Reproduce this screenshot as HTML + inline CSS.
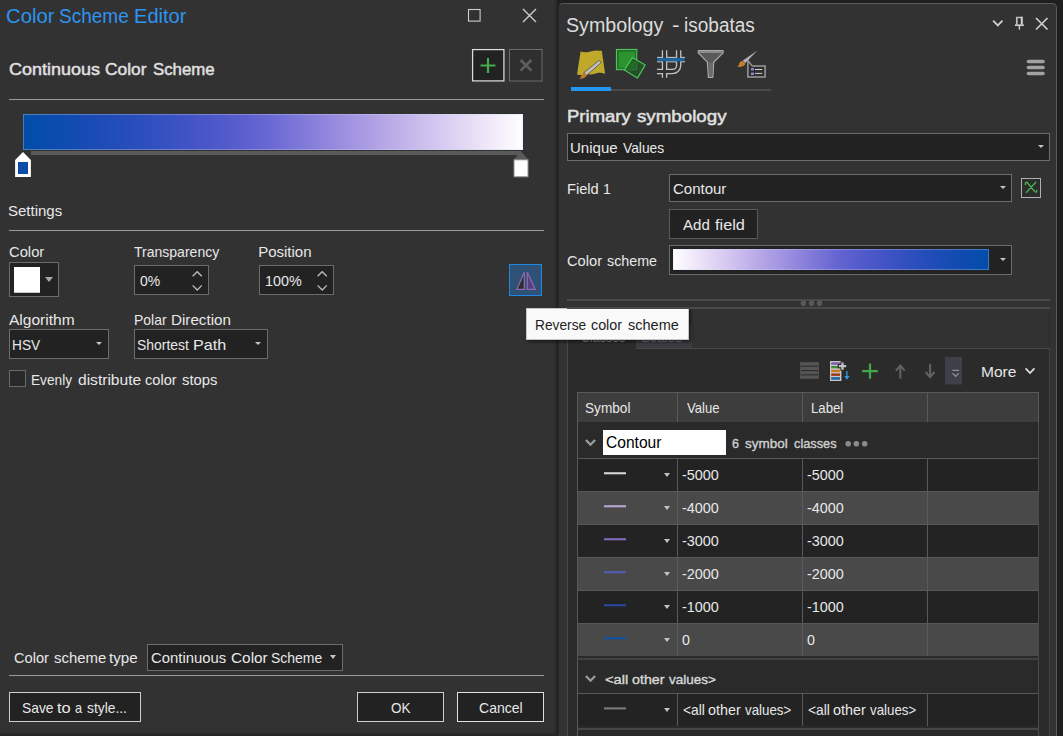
<!DOCTYPE html>
<html lang="en">
<head>
<meta charset="utf-8">
<title>Color Scheme Editor</title>
<style>
html,body{margin:0;padding:0;}
body{width:1063px;height:736px;overflow:hidden;background:#1f1f1f;position:relative;
 font-family:"Liberation Sans",sans-serif;font-size:15px;color:#e4e4e4;}
.abs,.t,.box,.ln{position:absolute;box-sizing:border-box;}
.t{white-space:nowrap;transform-origin:0 0;display:block;}
.box{background:#222223;border:1px solid #6c6c6c;}
.ln{background:#9a9a9a;height:1px;}
svg{position:absolute;overflow:visible;}
#left{position:absolute;left:0;top:0;width:557px;height:734px;background:#323232;
 box-shadow:inset -3px -2px 3px -2px rgba(0,0,0,.3);}
#right{position:absolute;left:558px;top:3px;width:499px;height:740px;background:#323232;box-sizing:border-box;
 border-top:1px solid #565b64;border-right:1px solid #565b64;border-left:1px solid #2a2a2a;border-radius:5px 5px 0 0;}
.row{position:absolute;left:578px;width:460px;height:32px;background:#232323;}
.row.alt{background:#494949;}
.row i{position:absolute;top:0;width:1px;height:32px;background:#5a5a5a;}
.hl{position:absolute;left:578px;width:460px;height:1px;background:#585858;}
.sym{position:absolute;left:604px;width:22px;height:2.4px;margin-top:.3px}
.dd{position:absolute;width:0;height:0;border-left:3.5px solid transparent;border-right:3.5px solid transparent;border-top:4.5px solid #c4c4c4;}
</style>
</head>
<body>

<!-- ================= LEFT: Color Scheme Editor ================= -->
<div id="left"></div>
<div class="abs" style="left:0;top:734px;width:558px;height:2px;background:#262626"></div>

<!-- window buttons -->
<svg style="left:0;top:0" width="557" height="100">
 <rect x="468.5" y="9.5" width="11.6" height="11.6" fill="none" stroke="#cdcdcd" stroke-width="1.1"/>
 <path d="M523 9 L536 22 M536 9 L523 22" stroke="#cdcdcd" stroke-width="1.4" fill="none"/>
 <!-- add / remove stop -->
 <rect x="472.6" y="49.6" width="31.3" height="31.3" fill="#222222" stroke="#dcdcdc" stroke-width="1.25"/>
 <path d="M488 58 V73 M480.5 65.5 H495.5" stroke="#43ad4b" stroke-width="2.2" fill="none"/>
 <rect x="509.5" y="49.5" width="32.5" height="31.5" fill="#2f2f2f" stroke="#6c6c6c" stroke-width="1"/>
 <path d="M520.6 60 L531.4 70.6 M531.4 60 L520.6 70.6" stroke="#5e5e5e" stroke-width="2.6" fill="none"/>
</svg>
<div class="ln" style="left:9px;top:99px;width:535px"></div>

<!-- gradient ramp -->
<div class="abs" style="left:23px;top:114px;width:500px;height:36px;background:linear-gradient(to right,rgb(0,77,168) 0.0%,rgb(9,76,173) 5.0%,rgb(18,75,177) 10.0%,rgb(27,76,181) 15.0%,rgb(37,77,186) 20.0%,rgb(47,79,190) 25.0%,rgb(58,82,194) 30.0%,rgb(70,85,199) 35.0%,rgb(81,90,203) 40.0%,rgb(93,96,207) 45.0%,rgb(108,106,212) 50.0%,rgb(125,119,216) 55.0%,rgb(142,132,220) 60.0%,rgb(159,146,225) 65.0%,rgb(175,160,229) 70.0%,rgb(190,175,233) 75.0%,rgb(205,190,238) 80.0%,rgb(219,206,242) 85.0%,rgb(232,222,246) 90.0%,rgb(244,238,251) 95.0%,rgb(255,255,255) 100.0%);box-shadow:inset 0 0 0 1px rgba(200,215,240,.35)"></div>
<div class="abs" style="left:31px;top:151px;width:490px;height:4px;background:#5a5a5a"></div>
<svg style="left:0;top:145px" width="557" height="40">
 <path d="M15.1 15 L23 7 L30.9 15 V32 H15.1 Z" fill="#ffffff"/>
 <rect x="18" y="17" width="10" height="12" fill="#0a4ba8"/>
 <path d="M513.5 14.8 L521 6.5 L528.5 14.8 Z" fill="#5a5a5a"/>
 <rect x="514" y="14.8" width="14" height="17" fill="#ffffff" stroke="#8e8e8e" stroke-width="1"/>
</svg>

<div class="ln" style="left:9px;top:230px;width:535px"></div>

<!-- color picker -->
<div class="box" style="left:9px;top:262px;width:50px;height:35px"></div>
<div class="abs" style="left:13.5px;top:266.5px;width:26.5px;height:26.5px;background:#fff;border-bottom:1px solid #c8c8c8"></div>
<div class="dd" style="left:45px;top:277px;border-left-width:4.5px;border-right-width:4.5px;border-top:5.5px solid #a8a8a8"></div>

<!-- spinners -->
<div class="box" style="left:134px;top:265px;width:75px;height:30px"></div>
<div class="box" style="left:259px;top:265px;width:75px;height:30px"></div>
<svg style="left:0;top:260px" width="557" height="40">
 <path d="M192.6 16.3 L197.2 11.7 L201.8 16.3 M192.6 25.4 L197.2 30 L201.8 25.4" fill="none" stroke="#bdbdbd" stroke-width="1.3"/>
 <path d="M317.6 16.3 L322.2 11.7 L326.8 16.3 M317.6 25.4 L322.2 30 L326.8 25.4" fill="none" stroke="#bdbdbd" stroke-width="1.3"/>
</svg>

<!-- reverse button -->
<div class="abs" style="left:509px;top:264px;width:33px;height:32px;background:#2f5175;border:1px solid #1e88e5"></div>
<svg style="left:500px;top:260px" width="50" height="40">
 <path d="M24.3 12.2 L16.9 29.3 H24.3 Z" fill="#2e2e31" stroke="#8e6bb0" stroke-width="1.2" stroke-linejoin="miter"/>
 <path d="M27.3 12.2 L35.2 29.3 H27.3 Z" fill="#563f80" stroke="#8e6bb0" stroke-width="1.2" stroke-linejoin="miter"/>
</svg>

<!-- combo boxes -->
<div class="box" style="left:9px;top:329px;width:100px;height:30px"></div>
<div class="dd" style="left:96px;top:341.5px;border-left-width:3.2px;border-right-width:3.2px;border-top-width:3.6px"></div>
<div class="box" style="left:134px;top:329px;width:134px;height:30px"></div>
<div class="dd" style="left:255px;top:341.5px;border-left-width:3.2px;border-right-width:3.2px;border-top-width:3.6px"></div>

<!-- checkbox -->
<div class="abs" style="left:9px;top:370px;width:17px;height:17px;background:#292929;border:1px solid #6a6a6a"></div>

<!-- bottom -->
<div class="box" style="left:147px;top:644px;width:196px;height:27px"></div>
<div class="dd" style="left:330px;top:654.5px;border-left-width:3.3px;border-right-width:3.3px;border-top-width:4px"></div>
<div class="ln" style="left:9px;top:675px;width:535px"></div>
<div class="box" style="left:9px;top:692px;width:132px;height:30px;border-color:#cfcfcf"></div>
<div class="box" style="left:357px;top:692px;width:87px;height:30px;border-color:#cfcfcf"></div>
<div class="box" style="left:457px;top:692px;width:87px;height:30px;border-color:#e0e0e0"></div>

<!-- ================= RIGHT: Symbology pane ================= -->
<div id="right"></div>

<!-- header icons -->
<svg style="left:558px;top:0" width="505" height="100" viewBox="558 0 505 100">
 <!-- pane buttons -->
 <path d="M993.1 20.7 L997.8 25.5 L1002.5 20.7" fill="none" stroke="#cfcfcf" stroke-width="1.8"/>
 <path d="M1016.8 24.6 V17.5 H1021.6" fill="none" stroke="#bdbdbd" stroke-width="1.7"/>
 <path d="M1021.8 16.7 V24.6" stroke="#d2d2d2" stroke-width="2"/>
 <path d="M1015 25.2 H1023.8" stroke="#d2d2d2" stroke-width="1.7"/>
 <path d="M1019.4 25.5 V29.7" stroke="#cfcfcf" stroke-width="1.4"/>
 <path d="M1036 18 L1047.5 29.5 M1047.5 18 L1036 29.5" stroke="#cfcfcf" stroke-width="1.7" fill="none"/>
 <!-- hamburger -->
 <g stroke="#a2a2a2" stroke-width="3.6" stroke-linecap="round">
  <path d="M1028.5 61.5 H1043"/><path d="M1028.5 67.5 H1043"/><path d="M1028.5 73.5 H1043"/>
 </g>
 <!-- 1: primary symbology (yellow sheet + brush) -->
 <path d="M580.6 51.6 C583.5 52.6 586 52.4 588.5 52 C591.5 51.4 593.5 50.4 596 50.4 C598 50.4 600 50.9 601.8 50.7 L605.1 73.9 C602.5 72.6 600 72.6 597.6 73.1 C594.5 73.8 592.5 74.6 590 74.4 C586 74.1 583.5 75.6 580 75.1 C579 74.9 578 74.6 577 74.4 Z" fill="#bfa82a"/>
 <path d="M598.9 60.5 C599.9 60.3 601.1 61.7 600.9 62.9 L586.4 75.6 L584.1 72.5 Z" fill="#bdbdbd" stroke="#4a4530" stroke-width=".7"/>
 <path d="M584.1 72.4 L586.5 75.6 C586 77.3 584.2 78.3 582.6 78.4 C581.4 78.9 580.2 78.9 579.3 78.8 C580.4 78 580.9 77.2 581.3 76 C581.6 74.4 582.6 73 584.1 72.4 Z" fill="#c07a2a"/>
 <!-- 2: vary by attribute (green squares) -->
 <rect x="616.45" y="49.45" width="20.3" height="20.2" fill="#226f2a" stroke="#50c55d" stroke-width="1.1"/>
 <rect x="618.7" y="51.6" width="16.3" height="16.3" fill="#2c932e"/>
 <path d="M632.6 57.7 L645.2 64.9 L637.4 78.1 L624.5 70.1 Z" fill="#1f5a24" fill-opacity=".7" stroke="#50c55d" stroke-width="1.2" stroke-linejoin="round"/>
 <path d="M632.9 59.6 L643.3 65.5 L636.9 76.2 L626.4 69.6 Z" fill="none" stroke="#1d5a23" stroke-opacity=".8" stroke-width="1.2"/>
 <!-- 3: scales (roads) -->
 <g fill="none" stroke="#c2c2c2" stroke-width="5.5">
  <path d="M664.55 50.2 V77.8"/><path d="M678.65 50.2 V65.2 C678.65 68.9 676 71.45 672.4 71.45 H657"/><path d="M657 59.6 H684.9"/>
 </g>
 <g fill="none" stroke="#323232" stroke-width="2.9">
  <path d="M664.55 49.6 V78.4"/><path d="M678.65 49.6 V65.2 C678.65 68.9 676 71.45 672.4 71.45 H656.4"/><path d="M656.4 59.6 H685.5"/>
 </g>
 <rect x="657.3" y="57.9" width="27.1" height="3.5" fill="#1f6299"/>
 <!-- 4: filter -->
 <path d="M698.3 50.5 H723.1 V52.9 L713.7 62.2 L712.8 77.4 H708.4 L707.4 62.2 L698.3 52.9 Z" fill="#595959" stroke="#ababab" stroke-width="1.2" stroke-linejoin="round"/>
 <rect x="698.9" y="51.1" width="23.6" height="1.9" fill="#8c8c8c"/>
 <path d="M708.3 62.6 H712.9 L712.2 76.8 H709 Z" fill="#6b6b6b"/>
 <!-- 5: advanced (brush + list) -->
 <path d="M747.9 60.6 V76.9 H765.1 V66.1 H752.4 Z" fill="#2f2f2f" stroke="#9a9a9a" stroke-width="1.5"/>
 <path d="M757.4 50.4 L745.3 63 L742.6 60.8 Z" fill="#b4b4b4"/>
 <path d="M742 60.9 L745.3 63.3 C745.2 65 743.6 66.3 741.8 66.6 C740.2 67.2 738.4 67 737 66.6 C738.4 65.8 739 64.9 739.3 63.6 C739.6 62.2 740.6 61.2 742 60.9 Z" fill="#c4802c"/>
 <rect x="751" y="68" width="3" height="2.4" fill="#9a7fd4"/><rect x="751" y="72.6" width="3" height="2.4" fill="#9a7fd4"/>
 <path d="M755 69.5 H762.2 M755 73.4 H762.2" stroke="#d0d0d0" stroke-width="1"/>
</svg>
<div class="abs" style="left:611px;top:89px;width:160px;height:2px;background:#4b4b4b"></div>
<div class="abs" style="left:571px;top:87px;width:40px;height:4px;background:#2196f3"></div>

<!-- primary symbology controls -->
<div class="box" style="left:567px;top:133px;width:483px;height:28px"></div>
<div class="dd" style="left:1038px;top:145px;border-left-width:3.2px;border-right-width:3.2px;border-top-width:3.8px"></div>
<div class="box" style="left:669px;top:174px;width:343px;height:28px"></div>
<div class="dd" style="left:1000px;top:186px;border-left-width:3.2px;border-right-width:3.2px;border-top-width:3.8px"></div>
<div class="box" style="left:1021px;top:178px;width:20px;height:20px;border-color:#b0b0b0;background:#2d2d2d"></div>
<svg style="left:1021px;top:178px" width="20" height="20">
 <path d="M4.3 6.5 C4.1 4.6 5.4 3.6 6.6 5 L13.6 13.4 C14.8 14.9 15.9 14 15.7 12.3 M14.8 4.2 L5.4 14.4" fill="none" stroke="#4ab457" stroke-width="1.35" stroke-linecap="round"/>
</svg>
<div class="box" style="left:669px;top:209px;width:89px;height:30px;border-color:#5a5a5a"></div>
<div class="box" style="left:669px;top:245px;width:343px;height:30px"></div>
<div class="abs" style="left:673px;top:249px;width:316px;height:21px;background:linear-gradient(to right,rgb(255,255,255) 0.0%,rgb(244,238,251) 5.0%,rgb(232,222,246) 10.0%,rgb(219,206,242) 15.0%,rgb(205,190,238) 20.0%,rgb(190,175,233) 25.0%,rgb(175,160,229) 30.0%,rgb(159,146,225) 35.0%,rgb(142,132,220) 40.0%,rgb(125,119,216) 45.0%,rgb(108,106,212) 50.0%,rgb(93,96,207) 55.0%,rgb(81,90,203) 60.0%,rgb(70,85,199) 65.0%,rgb(58,82,194) 70.0%,rgb(47,79,190) 75.0%,rgb(37,77,186) 80.0%,rgb(27,76,181) 85.0%,rgb(18,75,177) 90.0%,rgb(9,76,173) 95.0%,rgb(0,77,168) 100.0%);box-shadow:inset 0 0 0 1px rgba(210,220,245,.3)"></div>
<div class="dd" style="left:1000px;top:258px;border-left-width:3.2px;border-right-width:3.2px;border-top-width:3.8px"></div>

<!-- splitter -->
<div class="abs" style="left:567px;top:299px;width:483px;height:2px;background:#4a4a4a"></div>
<div class="abs" style="left:567px;top:307px;width:483px;height:2px;background:#4a4a4a;z-index:1"></div>
<svg style="left:795px;top:298px;z-index:2" width="30" height="10"><g fill="#5a5a5a"><circle cx="8.4" cy="5.2" r="2.7"/><circle cx="16.5" cy="5.2" r="2.7"/><circle cx="24.5" cy="5.2" r="2.7"/></g></svg>

<!-- tab control -->
<div class="abs" style="left:567px;top:307px;width:483px;height:440px;background:#2b2b2b;border-left:1px solid #484848"></div>
<div class="abs" style="left:1049px;top:348px;width:1px;height:400px;background:#444444"></div>
<div class="abs" style="left:568px;top:308px;width:481px;height:40px;background:#323232"></div>
<div class="abs" style="left:568px;top:325px;width:68px;height:24px;background:#2b2b2b"></div>
<div class="abs" style="left:636px;top:325px;width:56px;height:23px;background:#3b3c41"></div>
<div class="abs" style="left:636px;top:348px;width:414px;height:1px;background:#484848"></div>

<!-- class toolbar -->
<svg style="left:790px;top:350px" width="273" height="42" viewBox="790 350 273 42">
 <g fill="#555555"><rect x="800.5" y="362.5" width="18" height="3.2"/><rect x="800.5" y="366.8" width="18" height="3.2"/><rect x="800.5" y="371.1" width="18" height="3.2"/><rect x="800.5" y="375.4" width="18" height="3.2"/></g>
 <rect x="800.5" y="362.5" width="18" height="16.1" fill="none" stroke="#4d4d4d" stroke-width="1"/>
 <!-- list + add values -->
 <rect x="830" y="361" width="11.4" height="20" fill="#c9c9c9"/>
 <rect x="831.2" y="362.2" width="8.8" height="2.6" fill="#7e5fb0"/>
 <rect x="831.2" y="366" width="8.8" height="2.3" fill="#3d8a3d"/>
 <rect x="831.2" y="369.8" width="8.8" height="2.3" fill="#c87a1e"/>
 <rect x="831.2" y="373.4" width="8.8" height="2.5" fill="#a03a1a"/>
 <rect x="831.2" y="377.1" width="8.8" height="2.7" fill="#1f6aa5"/>
 <path d="M842.5 361.4 V370.8 M837.8 366.1 H847.2" stroke="#2b2b2b" stroke-width="4.4"/>
 <path d="M842.5 362.5 V369.8 M838.9 366.1 H846.2" stroke="#c2c2c2" stroke-width="2.3"/>
 <path d="M846.9 371 V377" fill="none" stroke="#2e9be6" stroke-width="1.3"/>
 <path d="M844.3 376 H849.5 L846.9 379.7 Z" fill="#2e9be6"/>
 <!-- plus -->
 <path d="M870 363.4 V378.8 M862.3 371.1 H877.7" stroke="#43a84b" stroke-width="2.2" fill="none"/>
 <!-- arrows -->
 <path d="M900.3 378.5 V365.4 M895.9 370.6 L900.3 365.5 L904.7 370.6" fill="none" stroke="#626262" stroke-width="2.1"/>
 <path d="M930.1 363.8 V377.2 M925.7 372 L930.1 377.1 L934.5 372" fill="none" stroke="#626262" stroke-width="2.1"/>
 <rect x="945" y="357" width="17" height="27.5" fill="#3d4048"/>
 <path d="M952.3 370.3 H959 M952.6 373.2 L955.65 376.4 L958.7 373.2" fill="none" stroke="#909090" stroke-width="1.3"/>
 <path d="M1025.6 368.3 L1030 373 L1034.4 368.3" fill="none" stroke="#e0e0e0" stroke-width="1.7"/>
</svg>

<!-- table -->
<div class="abs" style="left:577px;top:392px;width:462px;height:360px;background:#2a2a2a;border-left:1px solid #585858;border-right:1px solid #4a4a4a"></div>
<div class="abs" style="left:577px;top:392px;width:462px;height:30px;background:#3d3d3d;border:1px solid #5a5a5a;border-bottom:none"></div>
<div class="abs" style="left:677px;top:393px;width:1px;height:29px;background:#5a5a5a"></div>
<div class="abs" style="left:802px;top:393px;width:1px;height:29px;background:#5a5a5a"></div>
<div class="abs" style="left:927px;top:393px;width:1px;height:29px;background:#5a5a5a"></div>

<!-- group 1 header -->
<div class="abs" style="left:602.8px;top:430px;width:123.5px;height:25px;background:#fff"></div>
<svg style="left:578px;top:422px;z-index:3" width="460" height="320" viewBox="578 422 460 320">
 <path d="M585.9 440 L590.5 444.7 L595.1 440" fill="none" stroke="#9c9c9c" stroke-width="2.3"/>
 <g fill="#8a8a8a"><circle cx="848.2" cy="443.7" r="2.8"/><circle cx="856.4" cy="443.7" r="2.8"/><circle cx="864.7" cy="443.7" r="2.8"/></g>
 <path d="M604 473.25 H626" stroke="#d6d6d6" stroke-width="2.1"/>
 <path d="M604 506.25 H626" stroke="#b6a8d4" stroke-width="2.1"/>
 <path d="M604 539.25 H626" stroke="#7f6cbc" stroke-width="2.1"/>
 <path d="M604 572.25 H626" stroke="#525cb6" stroke-width="2.1"/>
 <path d="M604 605.25 H626" stroke="#2848a2" stroke-width="2.1"/>
 <path d="M604 638.25 H626" stroke="#1050a6" stroke-width="2.1"/>
 <path d="M604 708.40 H626" stroke="#7c7c7c" stroke-width="2.1"/>
 <path d="M585.9 676 L590.5 680.7 L595.1 676" fill="none" stroke="#9c9c9c" stroke-width="2.3"/>
</svg>

<div class="hl" style="top:458px"></div>
<div class="row" style="top:459px"><i style="left:99px"></i><i style="left:224px"></i><i style="left:349px"></i></div>
<div class="hl" style="top:491px"></div>
<div class="row alt" style="top:492px"><i style="left:99px"></i><i style="left:224px"></i><i style="left:349px"></i></div>
<div class="hl" style="top:524px"></div>
<div class="row" style="top:525px"><i style="left:99px"></i><i style="left:224px"></i><i style="left:349px"></i></div>
<div class="hl" style="top:557px"></div>
<div class="row alt" style="top:558px"><i style="left:99px"></i><i style="left:224px"></i><i style="left:349px"></i></div>
<div class="hl" style="top:590px"></div>
<div class="row" style="top:591px"><i style="left:99px"></i><i style="left:224px"></i><i style="left:349px"></i></div>
<div class="hl" style="top:623px"></div>
<div class="row alt" style="top:624px"><i style="left:99px"></i><i style="left:224px"></i><i style="left:349px"></i></div>
<div class="abs" style="left:578px;top:658px;width:460px;height:2px;background:#414141"></div>
<div class="hl" style="top:693px"></div>
<div class="row" style="top:694px"><i style="left:99px"></i><i style="left:224px"></i><i style="left:349px"></i></div>
<div class="abs" style="left:578px;top:728px;width:460px;height:2px;background:#464646"></div>

<!-- line symbols -->
<div class="dd" style="left:664px;top:473px"></div>
<div class="dd" style="left:664px;top:506px"></div>
<div class="dd" style="left:664px;top:539px"></div>
<div class="dd" style="left:664px;top:572px"></div>
<div class="dd" style="left:664px;top:605px"></div>
<div class="dd" style="left:664px;top:638px"></div>
<div class="dd" style="left:664px;top:708px"></div>

<!-- text -->
<span class="tl"><span class="t" style="left:5.6px;top:6px;font-size:20px;line-height:20px;color:#2d94f0;transform:scaleX(1.0128)">Color</span> <span class="t" style="left:58.8px;top:6px;font-size:20px;line-height:20px;color:#2d94f0;transform:scaleX(0.9514)">Scheme</span> <span class="t" style="left:134.1px;top:6px;font-size:20px;line-height:20px;color:#2d94f0;transform:scaleX(1.0039)">Editor</span></span>
<span class="tl"><span class="t" style="left:9.1px;top:61px;font-size:17px;line-height:17px;color:#e0e0e0;transform:scaleX(1.0570);-webkit-text-stroke:0.48px #e0e0e0">Continuous</span> <span class="t" style="left:105.4px;top:61px;font-size:17px;line-height:17px;color:#e0e0e0;transform:scaleX(1.0195);-webkit-text-stroke:0.48px #e0e0e0">Color</span> <span class="t" style="left:153.0px;top:61px;font-size:17px;line-height:17px;color:#e0e0e0;transform:scaleX(0.9887);-webkit-text-stroke:0.48px #e0e0e0">Scheme</span></span>
<span class="t" style="left:8.0px;top:203px;font-size:15px;line-height:15px;color:#e8e8e8;transform:scaleX(1.0000)">Settings</span>
<span class="t" style="left:9.0px;top:244px;font-size:15px;line-height:15px;color:#e8e8e8;transform:scaleX(0.9833)">Color</span>
<span class="t" style="left:134.0px;top:244px;font-size:15px;line-height:15px;color:#e8e8e8;transform:scaleX(0.9348)">Transparency</span>
<span class="t" style="left:258.2px;top:244px;font-size:15px;line-height:15px;color:#e8e8e8;transform:scaleX(1.0000)">Position</span>
<span class="t" style="left:140.0px;top:273px;font-size:15px;line-height:15px;color:#e8e8e8;transform:scaleX(0.9318)">0%</span>
<span class="t" style="left:264.9px;top:273px;font-size:15px;line-height:15px;color:#e8e8e8;transform:scaleX(0.9541)">100%</span>
<span class="t" style="left:9.2px;top:312px;font-size:15px;line-height:15px;color:#e8e8e8;transform:scaleX(1.0365)">Algorithm</span>
<span class="tl"><span class="t" style="left:133.9px;top:312px;font-size:15px;line-height:15px;color:#e8e8e8;transform:scaleX(0.9294)">Polar</span> <span class="t" style="left:171.0px;top:312px;font-size:15px;line-height:15px;color:#e8e8e8;transform:scaleX(1.0121)">Direction</span></span>
<span class="t" style="left:11.7px;top:337px;font-size:15px;line-height:15px;color:#e8e8e8;transform:scaleX(0.9133)">HSV</span>
<span class="tl"><span class="t" style="left:136.5px;top:337px;font-size:15px;line-height:15px;color:#e8e8e8;transform:scaleX(0.9291)">Shortest</span> <span class="t" style="left:192.8px;top:337px;font-size:15px;line-height:15px;color:#e8e8e8;transform:scaleX(1.0793)">Path</span></span>
<span class="tl"><span class="t" style="left:30.7px;top:372px;font-size:15px;line-height:15px;color:#e8e8e8;transform:scaleX(0.9114)">Evenly</span> <span class="t" style="left:77.7px;top:372px;font-size:15px;line-height:15px;color:#e8e8e8;transform:scaleX(1.0377)">distribute</span> <span class="t" style="left:144.9px;top:372px;font-size:15px;line-height:15px;color:#e8e8e8;transform:scaleX(0.9727)">color</span> <span class="t" style="left:181.8px;top:372px;font-size:15px;line-height:15px;color:#e8e8e8;transform:scaleX(0.9861)">stops</span></span>
<span class="tl"><span class="t" style="left:14.0px;top:650px;font-size:15px;line-height:15px;color:#e8e8e8;transform:scaleX(0.9722)">Color</span> <span class="t" style="left:53.5px;top:650px;font-size:15px;line-height:15px;color:#e8e8e8;transform:scaleX(0.9942)">scheme</span> <span class="t" style="left:108.9px;top:650px;font-size:15px;line-height:15px;color:#e8e8e8;transform:scaleX(1.0107)">type</span></span>
<span class="tl"><span class="t" style="left:150.7px;top:650px;font-size:15px;line-height:15px;color:#e8e8e8;transform:scaleX(0.9908)">Continuous</span> <span class="t" style="left:231.3px;top:650px;font-size:15px;line-height:15px;color:#e8e8e8;transform:scaleX(1.0250)">Color</span> <span class="t" style="left:270.9px;top:650px;font-size:15px;line-height:15px;color:#e8e8e8;transform:scaleX(0.9296)">Scheme</span></span>
<span class="tl"><span class="t" style="left:22.2px;top:700px;font-size:15px;line-height:15px;color:#e8e8e8;transform:scaleX(0.9212)">Save</span> <span class="t" style="left:57.0px;top:700px;font-size:15px;line-height:15px;color:#e8e8e8;transform:scaleX(1.0917)">to</span> <span class="t" style="left:75.0px;top:700px;font-size:15px;line-height:15px;color:#e8e8e8;transform:scaleX(0.8444)">a</span> <span class="t" style="left:87.1px;top:700px;font-size:15px;line-height:15px;color:#e8e8e8;transform:scaleX(0.9209)">style...</span></span>
<span class="t" style="left:390.6px;top:700px;font-size:15px;line-height:15px;color:#e8e8e8;transform:scaleX(0.9000)">OK</span>
<span class="t" style="left:478.9px;top:700px;font-size:15px;line-height:15px;color:#e8e8e8;transform:scaleX(0.9348)">Cancel</span>
<span class="tl"><span class="t" style="left:565.9px;top:16px;font-size:19.5px;line-height:19.5px;color:#dcdcdc;transform:scaleX(1.0083)">Symbology</span> <span class="t" style="left:671.6px;top:16px;font-size:19.5px;line-height:19.5px;color:#dcdcdc;transform:scaleX(1.1500)">-</span> <span class="t" style="left:684.4px;top:16px;font-size:19.5px;line-height:19.5px;color:#dcdcdc;transform:scaleX(0.9750)">isobatas</span></span>
<span class="tl"><span class="t" style="left:566.9px;top:108px;font-size:17px;line-height:17px;color:#e0e0e0;transform:scaleX(1.0897);-webkit-text-stroke:0.48px #e0e0e0">Primary</span> <span class="t" style="left:637.3px;top:108px;font-size:17px;line-height:17px;color:#e0e0e0;transform:scaleX(1.1024);-webkit-text-stroke:0.48px #e0e0e0">symbology</span></span>
<span class="tl"><span class="t" style="left:570.2px;top:140px;font-size:15px;line-height:15px;color:#e8e8e8;transform:scaleX(1.0022)">Unique</span> <span class="t" style="left:622.5px;top:140px;font-size:15px;line-height:15px;color:#e8e8e8;transform:scaleX(0.9200)">Values</span></span>
<span class="tl"><span class="t" style="left:567.0px;top:181px;font-size:15px;line-height:15px;color:#e8e8e8;transform:scaleX(0.9774)">Field</span> <span class="t" style="left:603.1px;top:181px;font-size:15px;line-height:15px;color:#e8e8e8;transform:scaleX(0.9429)">1</span></span>
<span class="t" style="left:673.0px;top:181px;font-size:15px;line-height:15px;color:#e8e8e8;transform:scaleX(1.0000)">Contour</span>
<span class="tl"><span class="t" style="left:682.9px;top:217px;font-size:15.5px;line-height:15.5px;color:#e8e8e8;transform:scaleX(0.9704)">Add</span> <span class="t" style="left:715.2px;top:217px;font-size:15.5px;line-height:15.5px;color:#e8e8e8;transform:scaleX(1.0500)">field</span></span>
<span class="tl"><span class="t" style="left:567.4px;top:253px;font-size:15px;line-height:15px;color:#e8e8e8;transform:scaleX(0.9806)">Color</span> <span class="t" style="left:607.4px;top:253px;font-size:15px;line-height:15px;color:#e8e8e8;transform:scaleX(0.9519)">scheme</span></span>
<span class="t" style="left:581.0px;top:329px;font-size:15px;line-height:15px;color:#8c8c8c;transform:scaleX(0.8302)">Classes</span>
<span class="t" style="left:641.1px;top:329px;font-size:15px;line-height:15px;color:#7c7c7c;transform:scaleX(0.9091)">Scales</span>
<span class="t" style="left:585.4px;top:400px;font-size:15px;line-height:15px;color:#e8e8e8;transform:scaleX(0.9082)">Symbol</span>
<span class="t" style="left:686.6px;top:400px;font-size:15px;line-height:15px;color:#e8e8e8;transform:scaleX(0.8730)">Value</span>
<span class="t" style="left:810.9px;top:400px;font-size:15px;line-height:15px;color:#e8e8e8;transform:scaleX(0.8800)">Label</span>
<span class="t" style="left:980.5px;top:364px;font-size:15px;line-height:15px;color:#e6e6e6;transform:scaleX(1.0364)">More</span>
<span class="t" style="left:606.2px;top:435px;font-size:16px;line-height:16px;color:#000;transform:scaleX(0.9737)">Contour</span>
<span class="tl"><span class="t" style="left:732.2px;top:437px;font-size:13.5px;line-height:13.5px;color:#cfcfcf;transform:scaleX(0.9250);-webkit-text-stroke:0.38px #cfcfcf">6</span> <span class="t" style="left:744.6px;top:437px;font-size:13.5px;line-height:13.5px;color:#cfcfcf;transform:scaleX(0.9977);-webkit-text-stroke:0.38px #cfcfcf">symbol</span> <span class="t" style="left:793.5px;top:437px;font-size:13.5px;line-height:13.5px;color:#cfcfcf;transform:scaleX(0.9467);-webkit-text-stroke:0.38px #cfcfcf">classes</span></span>
<span class="tl"><span class="t" style="left:604.5px;top:673px;font-size:13.5px;line-height:13.5px;color:#d8d8d8;transform:scaleX(1.0857);-webkit-text-stroke:0.38px #d8d8d8">&lt;all</span> <span class="t" style="left:632.2px;top:673px;font-size:13.5px;line-height:13.5px;color:#d8d8d8;transform:scaleX(1.0548);-webkit-text-stroke:0.38px #d8d8d8">other</span> <span class="t" style="left:669.2px;top:673px;font-size:13.5px;line-height:13.5px;color:#d8d8d8;transform:scaleX(1.0021);-webkit-text-stroke:0.38px #d8d8d8">values&gt;</span></span>
<span class="tl"><span class="t" style="left:682.5px;top:702px;font-size:15px;line-height:15px;color:#e8e8e8;transform:scaleX(0.9217)">&lt;all</span> <span class="t" style="left:708.2px;top:702px;font-size:15px;line-height:15px;color:#e8e8e8;transform:scaleX(0.9559)">other</span> <span class="t" style="left:745.1px;top:702px;font-size:15px;line-height:15px;color:#e8e8e8;transform:scaleX(0.8865)">values&gt;</span></span>
<span class="tl"><span class="t" style="left:807.5px;top:702px;font-size:15px;line-height:15px;color:#e8e8e8;transform:scaleX(0.9217)">&lt;all</span> <span class="t" style="left:833.2px;top:702px;font-size:15px;line-height:15px;color:#e8e8e8;transform:scaleX(0.9559)">other</span> <span class="t" style="left:870.1px;top:702px;font-size:15px;line-height:15px;color:#e8e8e8;transform:scaleX(0.8865)">values&gt;</span></span>
<span class="t" style="left:682.0px;top:467px;font-size:15px;line-height:15px;color:#e8e8e8;transform:scaleX(0.9605)">-5000</span>
<span class="t" style="left:807.0px;top:467px;font-size:15px;line-height:15px;color:#e8e8e8;transform:scaleX(0.9605)">-5000</span>
<span class="t" style="left:682.0px;top:500px;font-size:15px;line-height:15px;color:#e8e8e8;transform:scaleX(0.9605)">-4000</span>
<span class="t" style="left:807.0px;top:500px;font-size:15px;line-height:15px;color:#e8e8e8;transform:scaleX(0.9605)">-4000</span>
<span class="t" style="left:682.0px;top:533px;font-size:15px;line-height:15px;color:#e8e8e8;transform:scaleX(0.9605)">-3000</span>
<span class="t" style="left:807.0px;top:533px;font-size:15px;line-height:15px;color:#e8e8e8;transform:scaleX(0.9605)">-3000</span>
<span class="t" style="left:682.0px;top:566px;font-size:15px;line-height:15px;color:#e8e8e8;transform:scaleX(0.9605)">-2000</span>
<span class="t" style="left:807.0px;top:566px;font-size:15px;line-height:15px;color:#e8e8e8;transform:scaleX(0.9605)">-2000</span>
<span class="t" style="left:682.0px;top:599px;font-size:15px;line-height:15px;color:#e8e8e8;transform:scaleX(0.9605)">-1000</span>
<span class="t" style="left:807.0px;top:599px;font-size:15px;line-height:15px;color:#e8e8e8;transform:scaleX(0.9605)">-1000</span>
<span class="t" style="left:682.0px;top:632px;font-size:15px;line-height:15px;color:#e8e8e8;transform:scaleX(0.9500)">0</span>
<span class="t" style="left:807.0px;top:632px;font-size:15px;line-height:15px;color:#e8e8e8;transform:scaleX(0.9500)">0</span>

<!-- tooltip -->
<div class="abs" style="left:526px;top:308px;width:163px;height:32px;background:#f9f9f9;border:1px solid #c4c4c4;box-shadow:2px 2px 3px rgba(0,0,0,.5)"></div>
<span class="tl"><span class="t" style="left:535.3px;top:317px;font-size:15px;line-height:15px;color:#1e1e1e;transform:scaleX(0.9164)">Reverse</span> <span class="t" style="left:591.4px;top:317px;font-size:15px;line-height:15px;color:#1e1e1e;transform:scaleX(0.9545)">color</span> <span class="t" style="left:628.2px;top:317px;font-size:15px;line-height:15px;color:#1e1e1e;transform:scaleX(0.9673)">scheme</span></span>

</body>
</html>
